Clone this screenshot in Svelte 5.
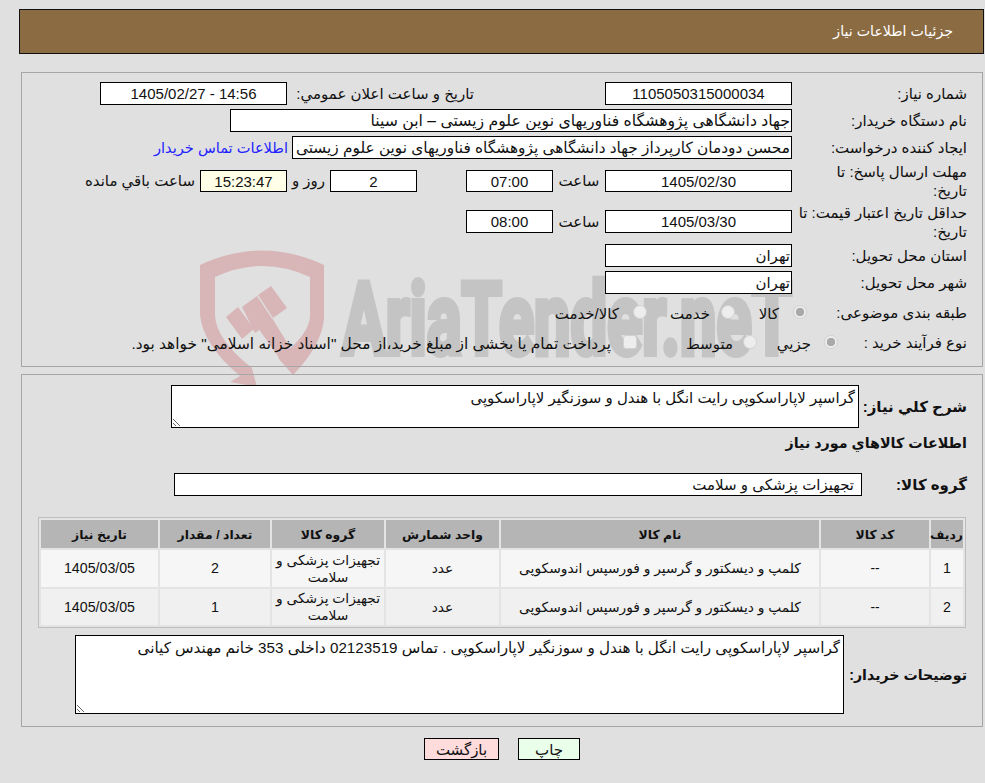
<script>
	const items = [
		{ id: 1, qty: 2 },
		{ id: 2, qty: 1 }
	];
	const desc = 'گراسپر لاپاراسکوپی رایت انگل با هندل و سوزنگیر لاپاراسکوپی';
</script>

<div class="page" dir="rtl">
	<svg class="watermark" viewBox="0 0 985 783" aria-hidden="true">
		<g fill="#d8b6b8">
			<path d="M200 265 Q262 236 324 265 L324 318 Q322 345 293 375 L278 358 Q310 335 310 315 L310 277 Q262 255 215 277 L215 315 Q216 340 252 368 L250 361 L257 387 L230 382 L240 376 Q203 345 200 315 Z" />
			<path d="M226 317 L238 307 L254 329 L242 339 Z" />
			<path d="M242 307 L257 296 L273 320 L255 333 Z" />
			<path d="M258 295 L271 286 L287 308 L273 318 Z" />
			<path d="M258 328 L272 318 L293 352 L282 362 Z" />
		</g>
		<text x="342" y="354" font-family="Roboto, sans-serif" font-weight="700" font-size="100" fill="#c4c4c4" stroke="#c4c4c4" stroke-width="6" textLength="450" lengthAdjust="spacingAndGlyphs" direction="ltr">AriaTender.neT</text>
	</svg>

	<header class="title">جزئیات اطلاعات نیاز</header>

	<section class="panel form">
		<div class="row">
			<label>شماره نیاز:</label>
			<input class="w187 center" readonly value="1105050315000034" />
			<span class="after-date">تاريخ و ساعت اعلان عمومي:</span>
			<input class="w187 center" readonly value="14:56 - 1405/02/27" />
		</div>
		<div class="row">
			<label>نام دستگاه خریدار:</label>
			<input class="w562 buyer" readonly value="جهاد دانشگاهی پژوهشگاه فناوریهای نوین علوم زیستی – ابن سینا" />
		</div>
		<div class="row">
			<label>ایجاد کننده درخواست:</label>
			<input class="w500 creator" readonly value="محسن دودمان کارپرداز جهاد دانشگاهی پژوهشگاه فناوریهای نوین علوم زیستی" />
			<a class="contact" href="#top">اطلاعات تماس خریدار</a>
		</div>
		<div class="row deadline">
			<label>مهلت ارسال پاسخ: تا تاریخ:</label>
			<input class="w187 center" readonly value="1405/02/30" />
			<span class="hour">ساعت</span>
			<input class="w87 center" readonly value="07:00" />
			<input class="w87 center days" readonly value="2" />
			<span class="day">روز و</span>
			<input class="w87 center clock" readonly value="15:23:47" />
			<span class="left">ساعت باقي مانده</span>
		</div>
		<div class="row validity">
			<label>حداقل تاریخ اعتبار قیمت: تا تاریخ:</label>
			<input class="w187 center" readonly value="1405/03/30" />
			<span class="hour">ساعت</span>
			<input class="w87 center" readonly value="08:00" />
		</div>
		<div class="row">
			<label>استان محل تحویل:</label>
			<input class="w187" readonly value="تهران" />
		</div>
		<div class="row">
			<label>شهر محل تحویل:</label>
			<input class="w187" readonly value="تهران" />
		</div>
		<div class="row choices subject">
			<label>طبقه بندی موضوعی:</label>
			<input type="radio" disabled checked /><span class="opt-a">کالا</span>
			<input type="radio" disabled /><span class="opt-b">خدمت</span>
			<input type="radio" disabled /><span class="opt-e">کالا/خدمت</span>
		</div>
		<div class="row choices process">
			<label>نوع فرآیند خرید :</label>
			<input type="radio" disabled checked /><span class="opt-c">جزیي</span>
			<input type="radio" disabled /><span class="opt-d">متوسط</span>
			<input type="checkbox" disabled /><span class="opt-f">پرداخت تمام یا بخشی از مبلغ خرید،از محل "اسناد خزانه اسلامی" خواهد بود.</span>
		</div>
	</section>

	<section class="panel detail">
		<div class="summary">
			<strong>شرح کلي نياز:</strong>
			<textarea readonly value={desc}></textarea>
		</div>
		<h4>اطلاعات کالاهاي مورد نياز</h4>
		<div class="group">
			<strong>گروه کالا:</strong>
			<input readonly value="تجهیزات پزشکی و سلامت" />
		</div>

		<table>
			<colgroup>
				<col style="width:32px" /><col style="width:108px" /><col style="width:318px" /><col style="width:113px" />
				<col style="width:112px" /><col style="width:110px" /><col style="width:117px" />
			</colgroup>
			<thead>
				<tr>
					<th>ردیف</th><th>کد کالا</th><th>نام کالا</th><th>واحد شمارش</th><th>گروه کالا</th><th>تعداد / مقدار</th><th>تاریخ نیاز</th>
				</tr>
			</thead>
			<tbody>
				{#each items as item}
					<tr>
						<td class="num">{item.id}</td>
						<td>--</td>
						<td>کلمپ و دیسکتور و گرسپر و فورسپس اندوسکوپی</td>
						<td>عدد</td>
						<td>تجهیزات پزشکی و سلامت</td>
						<td class="num">{item.qty}</td>
						<td class="num">1405/03/05</td>
					</tr>
				{/each}
			</tbody>
		</table>

		<div class="notes">
			<strong>توضیحات خریدار:</strong>
			<textarea readonly value={desc + ' . تماس 02123519 داخلی 353 خانم مهندس کیانی'}></textarea>
		</div>
	</section>

	<div class="actions">
		<button class="print">چاپ</button>
		<button class="back">بازگشت</button>
	</div>
</div>

<style>
	:global(body) {
		background: #e0e0e0;
	}

	.page {
		position: relative;
		height: 783px;
		overflow: hidden;
		padding-top: 9px;
		box-sizing: border-box;
		font-family: "Liberation Sans", "DejaVu Sans", sans-serif;
		font-size: 15px;
		color: #111;
	}

	.watermark {
		position: absolute;
		left: 0;
		top: 0;
		width: 985px;
		height: 783px;
	}

	.title {
		position: relative;
		width: 963px;
		height: 43px;
		margin-inline-start: 1px;
		border: 1px solid #111;
		background: #8b6b42;
		color: #fff;
		line-height: 42px;
		text-indent: 30px;
		font-size: 14.2px;
	}

	.panel {
		position: relative;
		box-sizing: border-box;
		width: 962px;
		margin-inline-start: 2px;
		border: 1px solid #a6a6a6;
	}

	.form {
		margin-top: 18px;
		height: 295px;
		padding: 9px 15px 0 0;
	}

	.detail {
		margin-top: 7px;
		height: 353px;
		padding: 10px 15px 0 0;
	}

	.row {
		display: flex;
		align-items: center;
		height: 23px;
		margin-bottom: 4px;
	}

	.row label {
		box-sizing: border-box;
		width: 175px;
		flex: none;
		line-height: 19px;
	}

	input:not([type]) {
		box-sizing: border-box;
		height: 23px;
		border: 1px solid #000;
		border-radius: 0;
		background: #fff;
		padding: 0 1px;
		font: inherit;
		color: #111;
		outline: none;
	}

	.w187 { width: 187px; }
	.w562 { width: 562px; }
	.w500 { width: 500px; }
	.w87 { width: 87px; }
	.center { text-align: center; }
	.clock { background: #ffffe8 !important; }

	input.buyer { font-size: 15.7px; }
	input.creator { font-size: 15.35px; }

	.after-date {
		margin-inline-start: 131px;
		margin-inline-end: 6px;
		width: 181px;
		white-space: nowrap;
	}

	.contact {
		margin-inline-start: 4px;
		color: #2222ff;
		font-size: 14.6px;
		text-decoration: none;
		white-space: nowrap;
	}

	.deadline {
		margin-top: 11px;
		height: 22px;
		margin-bottom: 18px;
	}

	.deadline label { padding-inline-end: 25px; }
	.deadline input { height: 22px; }

	.validity { margin-bottom: 11px; }

	.hour {
		width: 52px;
		text-align: center;
	}

	.days { margin-inline-start: 49px; }

	.day {
		width: 43px;
		text-align: center;
	}

	.left { margin-inline-start: 5px; white-space: nowrap; }

	.choices {
		height: 26px;
		margin-bottom: 4px;
	}

	.subject { margin-top: 5px; }

	.choices span {
		flex: none;
		padding-top: 3px;
		white-space: nowrap;
	}

	.choices input {
		appearance: none;
		flex: none;
		box-sizing: border-box;
		width: 14px;
		height: 14px;
		margin: 0;
		border: 1px solid #d2d2d2;
		border-radius: 50%;
		background: #ededed;
	}

	.choices input[type="checkbox"] {
		border-radius: 3px;
	}

	.choices input:checked {
		background: radial-gradient(circle, #a9a9a9 0 4px, #ededed 4.5px);
	}

	.subject label { width: 160px; }
	.opt-a { margin-inline-start: 14px; width: 44px; }
	.opt-b { margin-inline-start: 11px; width: 63px; }
	.opt-e { margin-inline-start: 14px; }

	.process label { width: 129px; }
	.opt-c { margin-inline-start: 13px; width: 54px; }
	.opt-d { margin-inline-start: 10px; width: 96px; }
	.opt-f { margin-inline-start: 12px; font-size: 15.4px; }

	.summary,
	.group,
	.notes {
		display: flex;
		align-items: center;
	}

	strong {
		flex: none;
		font-size: 15px;
	}

	.summary strong { width: 108px; }

	textarea {
		box-sizing: border-box;
		border: 1px solid #000;
		border-radius: 0;
		background: #fff;
		padding: 3px;
		font: inherit;
		color: #111;
		outline: none;
		resize: both;
	}

	.summary textarea {
		width: 688px;
		height: 43px;
	}

	h4 {
		margin: 6px 0 0;
		height: 39px;
		line-height: 18px;
		font-size: 14.3px;
	}

	.group strong { width: 105px; }

	.group input {
		width: 688px;
		padding: 0 7px;
	}

	table {
		margin: 21px 1px 0 0;
		width: 928px;
		table-layout: fixed;
		border: 1px solid #bdbdbd;
		border-spacing: 2px;
		background: #e4e4e4;
	}

	th {
		height: 28px;
		padding: 0;
		background: #b5b5b5;
		font-size: 12.4px;
		font-weight: bold;
	}

	td {
		height: 36px;
		padding: 0 1px;
		background: #f6f6f6;
		text-align: center;
		font-size: 13.8px;
		line-height: 17px;
	}

	td.num { font-size: 14.2px; }

	tbody tr:first-child td { height: 37px; }
	tbody tr:nth-child(2) td { background: #f0f0f0; }

	.notes {
		margin-top: 7px;
	}

	.notes strong {
		width: 123px;
		font-size: 14.2px;
	}

	.notes textarea {
		width: 769px;
		height: 79px;
		font-size: 15.2px;
	}

	.actions {
		position: relative;
		display: flex;
		gap: 19px;
		margin-top: 11px;
		padding-inline-start: 405px;
	}

	button {
		box-sizing: border-box;
		height: 22px;
		border: 1px solid #000;
		border-radius: 0;
		padding: 2px 0 0;
		font: inherit;
		color: #111;
	}

	.print { width: 62px; background: #eaffea; }
	.back { width: 75px; background: #ffdcdc; }
</style>
